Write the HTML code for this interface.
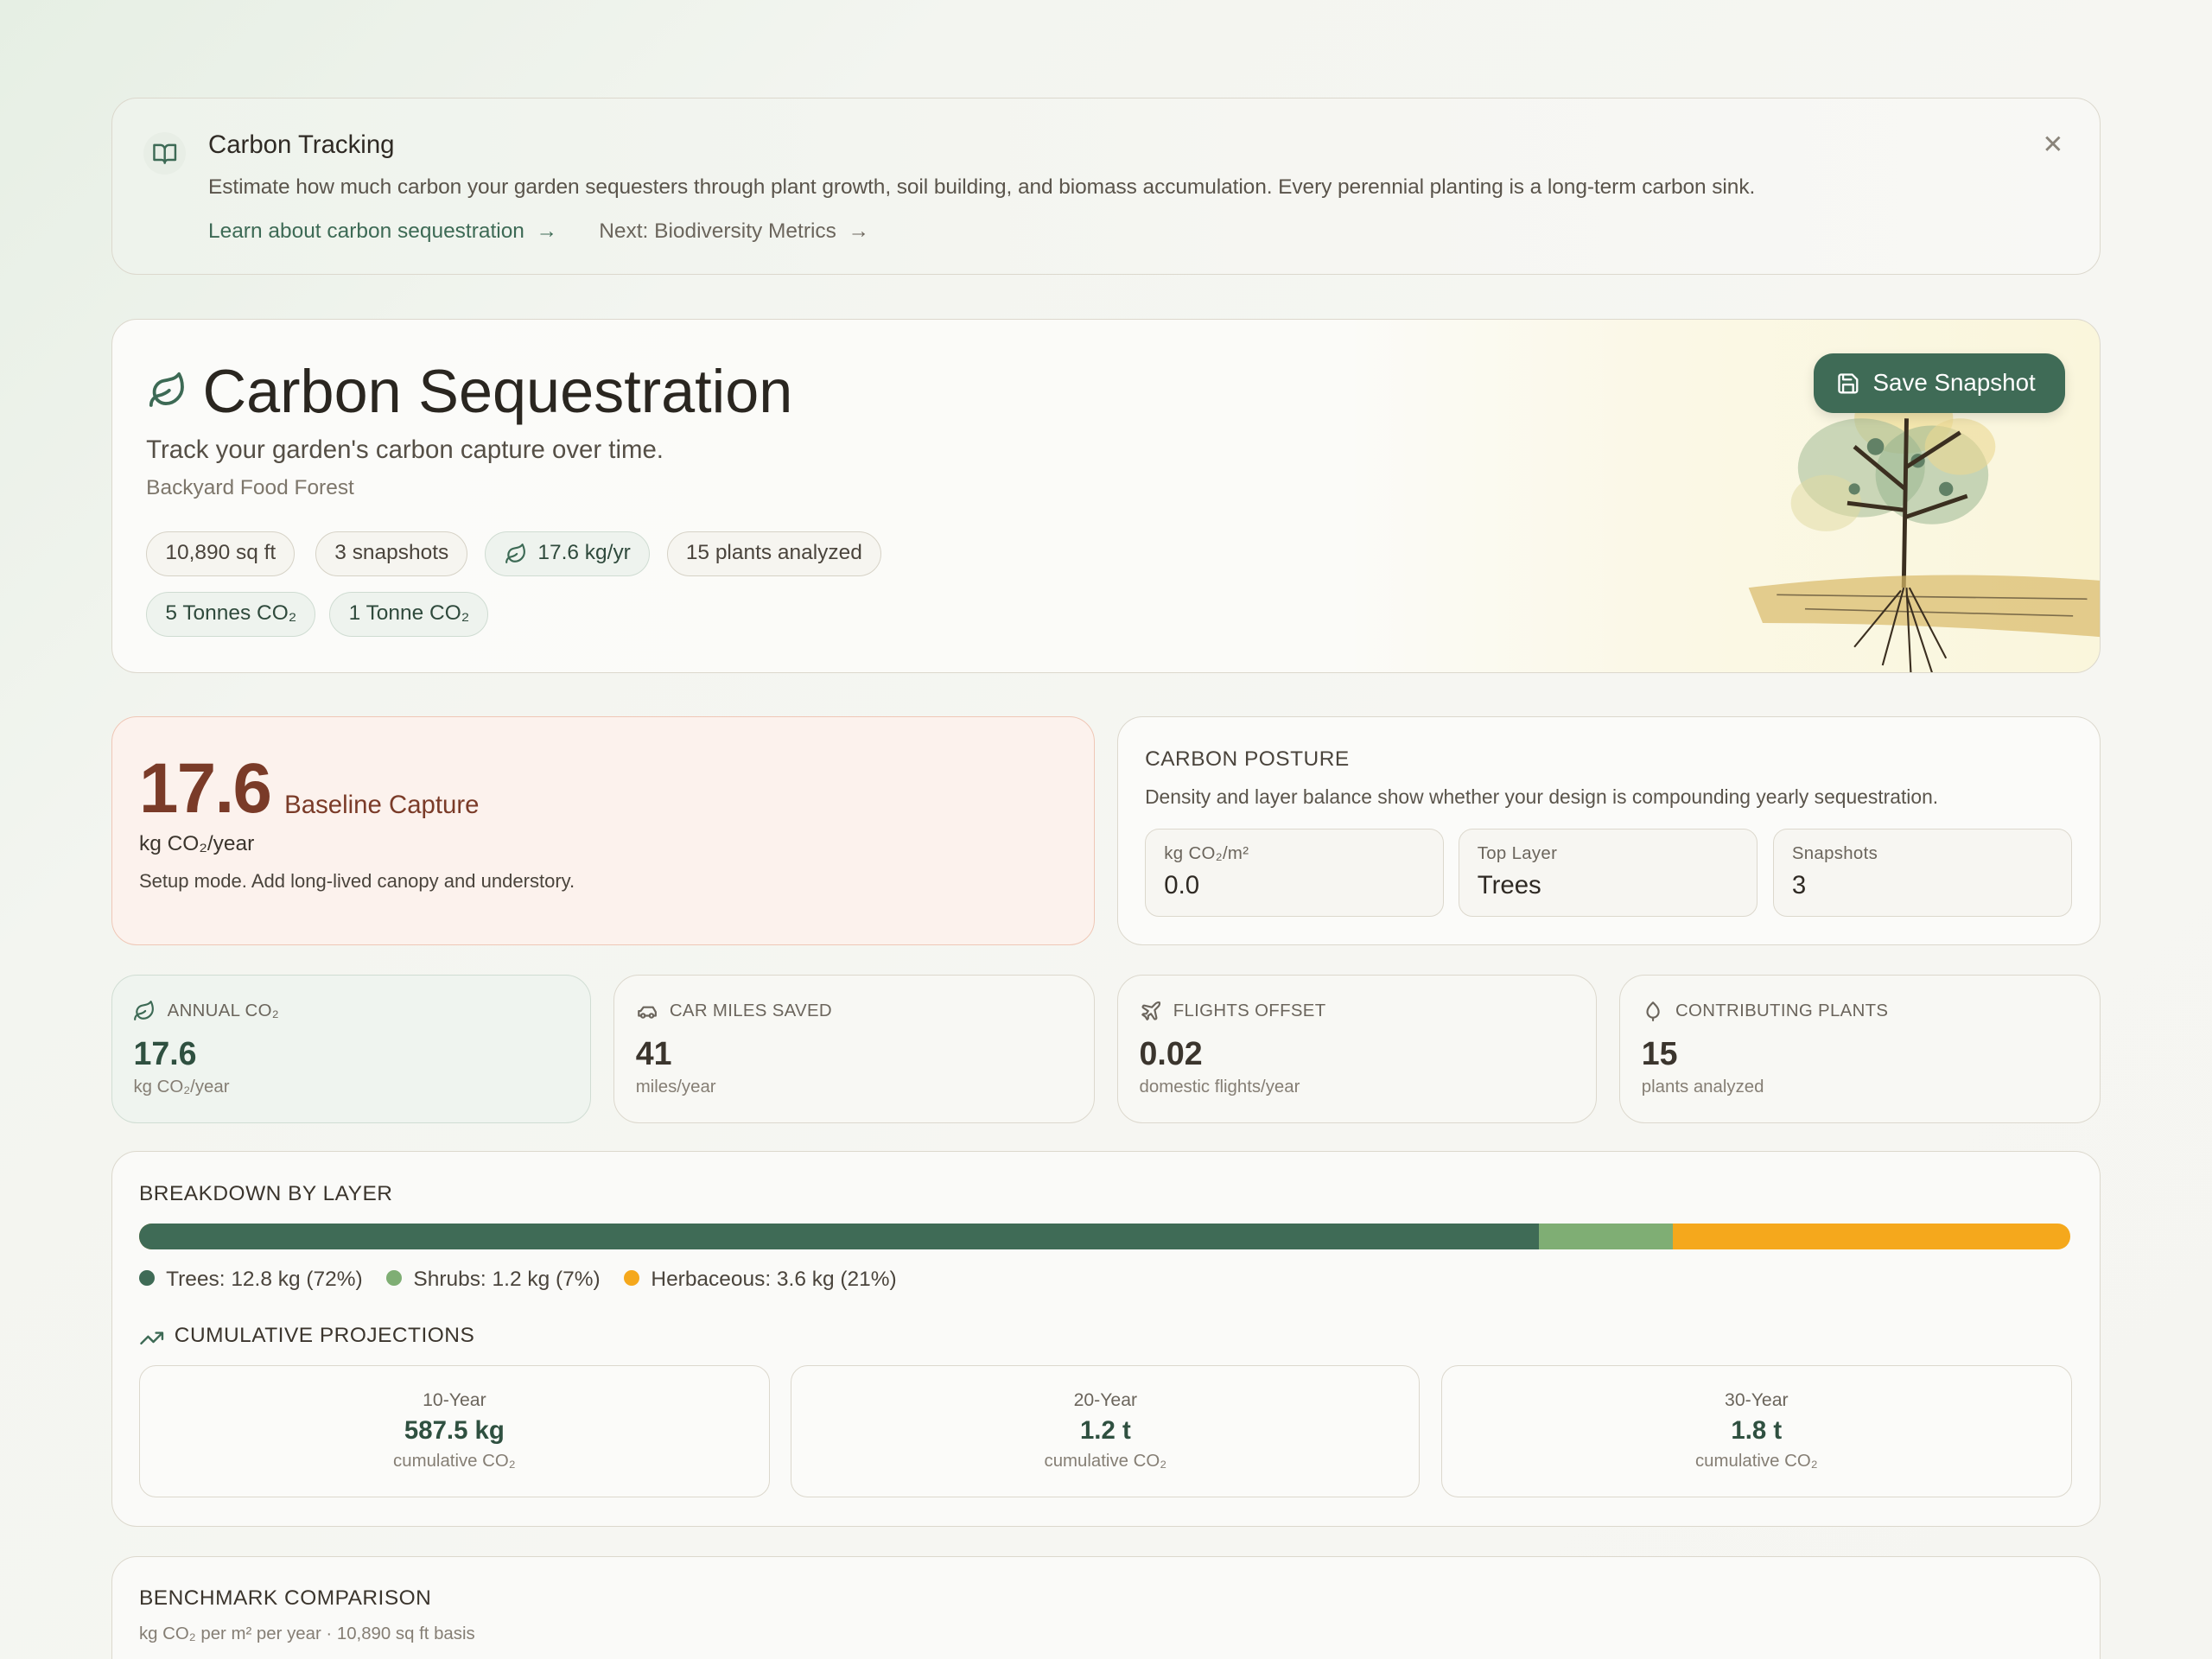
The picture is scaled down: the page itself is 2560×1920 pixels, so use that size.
<!DOCTYPE html>
<html><head><meta charset="utf-8"><style>
*{box-sizing:border-box;margin:0;padding:0}
html,body{width:2560px;height:1920px;overflow:hidden;background:#f4f5f1}
#w{zoom:1.632653;width:1568px;height:1176px;position:relative;font-family:"Liberation Sans",sans-serif;color:#2f2a24;background:linear-gradient(135deg,#e6efe4 0%,#f3f5f0 25%,#f6f6f2 60%,#f5f5f1 100%)}
.card{position:absolute;border:1px solid #dcd8cd;border-radius:18px;background:#f8f8f4}
.abs{position:absolute;white-space:nowrap}
.chip{position:absolute;height:32px;border:1px solid #d6d2c6;border-radius:16px;background:#f6f5f0;font-size:15px;color:#4a443c;line-height:30px;padding:0 13px}
.chip.g{background:#eef3ee;border-color:#cfdcd2;color:#2f4a3c}
.lbl{font-size:12.5px;color:#6b655c;letter-spacing:.2px}
.sub{font-size:12.5px;color:#857e74}
.big{font-size:23px;font-weight:bold;color:#3b352d}
.ic{position:absolute;fill:none;stroke-width:2;stroke-linecap:round;stroke-linejoin:round}
</style></head><body><div id="w">

<div class="card" style="left:79px;top:69px;width:1410px;height:126px;background:linear-gradient(90deg,#eef3ec,#f6f6f2 60%,#f8f8f5)">
  <div class="abs" style="left:22px;top:24px;width:30px;height:30px;border-radius:50%;background:#e8eee6"></div>
  <svg class="ic" style="left:28px;top:30px" width="18" height="18" viewBox="0 0 24 24" stroke="#3d6a55"><path d="M2 4h6a4 4 0 0 1 4 4v13a3 3 0 0 0-3-3H2z M22 4h-6a4 4 0 0 0-4 4v13a3 3 0 0 1 3-3h7z"/></svg>
  <div class="abs" style="left:68px;top:23px;font-size:18px;color:#2f2a24">Carbon Tracking</div>
  <div class="abs" style="left:68px;top:55px;font-size:15px;letter-spacing:-.05px;color:#5a544b">Estimate how much carbon your garden sequesters through plant growth, soil building, and biomass accumulation. Every perennial planting is a long-term carbon sink.</div>
  <div class="abs" style="left:68px;top:86px;font-size:15px;color:#3d6a55">Learn about carbon sequestration &nbsp;→</div>
  <div class="abs" style="left:345px;top:86px;font-size:15px;color:#6b655c">Next: Biodiversity Metrics &nbsp;→</div>
  <div class="abs" style="left:1368px;top:22px;font-size:18px;color:#8a847a">✕</div>
</div>

<div class="card" style="left:79px;top:226px;width:1410px;height:251px;background:linear-gradient(90deg,#fbfbf9 0%,#fbfbf8 62%,#fbf8e6 78%,#faf6dc 100%);overflow:hidden">
  <svg class="abs" style="left:1140px;top:0" width="270" height="251" viewBox="0 0 270 251">
    <g opacity=".75">
    <ellipse cx="130" cy="70" rx="35" ry="25" fill="#e8c95a" opacity=".5"/>
    <ellipse cx="100" cy="105" rx="45" ry="35" fill="#8fae84" opacity=".6"/>
    <ellipse cx="150" cy="110" rx="40" ry="35" fill="#6f9a70" opacity=".5"/>
    <ellipse cx="170" cy="90" rx="25" ry="20" fill="#e6cf7a" opacity=".6"/>
    <ellipse cx="75" cy="130" rx="25" ry="20" fill="#d8cf8a" opacity=".5"/>
    <circle cx="110" cy="90" r="6" fill="#2f5a3e"/><circle cx="140" cy="100" r="5" fill="#2f5a3e"/><circle cx="95" cy="120" r="4" fill="#2f5a3e"/><circle cx="160" cy="120" r="5" fill="#2f5a3e"/>
    </g>
    <path d="M130 190 L132 70 M131 120 L95 90 M131 105 L170 80 M131 140 L175 125 M131 135 L90 130" stroke="#3b2f20" stroke-width="3" fill="none"/>
    <path d="M20 190 Q140 175 270 185 L270 225 Q150 215 30 215Z" fill="#d9b968" opacity=".7"/>
    <path d="M40 195 L260 198 M60 205 L250 210" stroke="#3b2f20" stroke-width="1" opacity=".6"/>
    <path d="M130 190 L115 245 M132 190 L135 250 M134 190 L160 240 M128 192 L95 232 M132 195 L150 250" stroke="#3b2f20" stroke-width="1.3"/>
  </svg>
  <svg class="ic" style="left:25px;top:36px" width="28" height="28" viewBox="0 0 24 24" stroke="#3d6a55"><path d="M11 20A7 7 0 0 1 9.8 6.1C15.5 5 17 4.5 19 2c1 2 2 4.2 2 8 0 5.5-4.8 10-10 10Z"/><path d="M2 21c0-3 1.9-5.4 5.1-6C9.5 14.5 12 13 13 12"/></svg>
  <div class="abs" style="left:64px;top:26px;font-size:43px;color:#2a2620">Carbon Sequestration</div>
  <div class="abs" style="left:24px;top:82px;font-size:18px;color:#554f46">Track your garden's carbon capture over time.</div>
  <div class="abs" style="left:24px;top:111px;font-size:15px;color:#7d766b">Backyard Food Forest</div>
  <div class="chip" style="left:24px;top:150px">10,890 sq ft</div>
  <div class="chip" style="left:144px;top:150px">3 snapshots</div>
  <div class="chip g" style="left:264px;top:150px;padding-left:37px">17.6 kg/yr</div>
  <svg class="ic" style="left:278px;top:158px" width="16" height="16" viewBox="0 0 24 24" stroke="#3d6a55"><path d="M11 20A7 7 0 0 1 9.8 6.1C15.5 5 17 4.5 19 2c1 2 2 4.2 2 8 0 5.5-4.8 10-10 10Z"/><path d="M2 21c0-3 1.9-5.4 5.1-6C9.5 14.5 12 13 13 12"/></svg>
  <div class="chip" style="left:393px;top:150px">15 plants analyzed</div>
  <div class="chip g" style="left:24px;top:193px">5 Tonnes CO₂</div>
  <div class="chip g" style="left:154px;top:193px">1 Tonne CO₂</div>
  <div class="abs" style="left:1206px;top:24px;width:178px;height:42px;border-radius:14px;background:#3f6b56;color:#fff;font-size:17px;line-height:42px;padding-left:42px;box-shadow:0 3px 8px rgba(0,0,0,.12)">Save Snapshot</div>
  <svg class="ic" style="left:1222px;top:37px" width="17" height="17" viewBox="0 0 24 24" stroke="#fff"><path d="M5 3h11l5 5v11a2 2 0 0 1-2 2H5a2 2 0 0 1-2-2V5a2 2 0 0 1 2-2z M7 21v-8h10v8 M7 3v5h8"/></svg>
</div>

<div class="card" style="left:79px;top:508px;width:697px;height:162px;background:#fcf2ed;border-color:#efc7b6">
  <div class="abs" style="left:19px;top:22px;font-size:50px;font-weight:bold;letter-spacing:-1px;color:#7a3b28">17.6</div>
  <div class="abs" style="left:122px;top:52px;font-size:18px;color:#7a3b28">Baseline Capture</div>
  <div class="abs" style="left:19px;top:81px;font-size:15px;color:#3b352d">kg CO₂/year</div>
  <div class="abs" style="left:19px;top:108px;font-size:13.5px;color:#4a443c">Setup mode. Add long-lived canopy and understory.</div>
</div>

<div class="card" style="left:792px;top:508px;width:697px;height:162px;background:#fbfbf9">
  <div class="abs" style="left:19px;top:21px;font-size:15px;color:#4a443c;letter-spacing:.3px">CARBON POSTURE</div>
  <div class="abs" style="left:19px;top:48px;font-size:14px;color:#5a544b">Density and layer balance show whether your design is compounding yearly sequestration.</div>
  <div class="card" style="left:19px;top:79px;width:212px;height:62px;border-radius:10px;background:#f7f6f2"><div class="abs lbl" style="left:13px;top:10px">kg CO₂/m²</div><div class="abs" style="left:13px;top:29px;font-size:18px">0.0</div></div>
  <div class="card" style="left:241px;top:79px;width:212px;height:62px;border-radius:10px;background:#f7f6f2"><div class="abs lbl" style="left:13px;top:10px">Top Layer</div><div class="abs" style="left:13px;top:29px;font-size:18px">Trees</div></div>
  <div class="card" style="left:464px;top:79px;width:212px;height:62px;border-radius:10px;background:#f7f6f2"><div class="abs lbl" style="left:13px;top:10px">Snapshots</div><div class="abs" style="left:13px;top:29px;font-size:18px">3</div></div>
</div>

<div class="card" style="left:79px;top:691px;width:340px;height:105px;background:#eff4ef;border-color:#d0ddd3">
  <svg class="ic" style="left:15px;top:17px" width="16" height="16" viewBox="0 0 24 24" stroke="#3d6a55"><path d="M11 20A7 7 0 0 1 9.8 6.1C15.5 5 17 4.5 19 2c1 2 2 4.2 2 8 0 5.5-4.8 10-10 10Z"/><path d="M2 21c0-3 1.9-5.4 5.1-6C9.5 14.5 12 13 13 12"/></svg>
  <div class="abs lbl" style="left:39px;top:18px">ANNUAL CO₂</div>
  <div class="abs big" style="left:15px;top:42px;color:#2f5040">17.6</div><div class="abs sub" style="left:15px;top:72px">kg CO₂/year</div></div>
<div class="card" style="left:435px;top:691px;width:341px;height:105px">
  <svg class="ic" style="left:15px;top:17px" width="16" height="16" viewBox="0 0 24 24" stroke="#6b655c"><path d="M19 17h2v-4l-3-5H8L5 12H3v5h2"/><circle cx="7.5" cy="17" r="2"/><circle cx="16.5" cy="17" r="2"/><path d="M9.5 17h5"/></svg>
  <div class="abs lbl" style="left:39px;top:18px">CAR MILES SAVED</div>
  <div class="abs big" style="left:15px;top:42px">41</div><div class="abs sub" style="left:15px;top:72px">miles/year</div></div>
<div class="card" style="left:792px;top:691px;width:340px;height:105px">
  <svg class="ic" style="left:15px;top:17px" width="16" height="16" viewBox="0 0 24 24" stroke="#6b655c"><path d="M17.8 19.2 16 11l3.5-3.5C21 6 21.5 4 21 3c-1-.5-3 0-4.5 1.5L13 8 4.8 6.2c-.5-.1-.9.1-1.1.5l-.3.5c-.2.5-.1 1 .3 1.3L9 12l-2 3H4l-1 1 3 2 2 3 1-1v-3l3-2 3.5 5.3c.3.4.8.5 1.3.3l.5-.2c.4-.3.6-.7.5-1.2z"/></svg>
  <div class="abs lbl" style="left:39px;top:18px">FLIGHTS OFFSET</div>
  <div class="abs big" style="left:15px;top:42px">0.02</div><div class="abs sub" style="left:15px;top:72px">domestic flights/year</div></div>
<div class="card" style="left:1148px;top:691px;width:341px;height:105px">
  <svg class="ic" style="left:15px;top:17px" width="16" height="16" viewBox="0 0 24 24" stroke="#6b655c"><path d="M12 3c-3 3-6 6-6 10a6 6 0 0 0 12 0c0-4-3-7-6-10z M12 19v3"/></svg>
  <div class="abs lbl" style="left:39px;top:18px">CONTRIBUTING PLANTS</div>
  <div class="abs big" style="left:15px;top:42px">15</div><div class="abs sub" style="left:15px;top:72px">plants analyzed</div></div>

<div class="card" style="left:79px;top:816px;width:1410px;height:266px;background:#fafaf8">
  <div class="abs" style="left:19px;top:21px;font-size:15px;color:#3b352d;letter-spacing:.3px">BREAKDOWN BY LAYER</div>
  <div class="abs" style="left:19px;top:51px;width:1369px;height:18px;border-radius:9px;overflow:hidden;background:#f5a81c">
    <div class="abs" style="left:0;top:0;width:992px;height:18px;background:#3f6b56"></div>
    <div class="abs" style="left:992px;top:0;width:95px;height:18px;background:#7fae74"></div>
  </div>
  <div class="abs" style="left:19px;top:82px;font-size:15px;color:#4a443c"><span style="display:inline-block;width:11px;height:11px;border-radius:50%;background:#3f6b56"></span>&nbsp; Trees: 12.8 kg (72%) &nbsp;&nbsp;&nbsp;<span style="display:inline-block;width:11px;height:11px;border-radius:50%;background:#7fae74"></span>&nbsp; Shrubs: 1.2 kg (7%) &nbsp;&nbsp;&nbsp;<span style="display:inline-block;width:11px;height:11px;border-radius:50%;background:#f5a81c"></span>&nbsp; Herbaceous: 3.6 kg (21%)</div>
  <svg class="ic" style="left:19px;top:123px" width="18" height="18" viewBox="0 0 24 24" stroke="#3d6a55"><path d="M22 7l-8.5 8.5-5-5L2 17 M16 7h6v6"/></svg>
  <div class="abs" style="left:44px;top:122px;font-size:15px;color:#3b352d;letter-spacing:.3px">CUMULATIVE PROJECTIONS</div>
  <div class="card" style="left:19px;top:151px;width:447px;height:94px;border-radius:12px;background:#fbfbf9;text-align:center"><div style="margin-top:17px;font-size:13px;color:#6b655c">10-Year</div><div style="font-size:18px;font-weight:bold;color:#2f5040;margin-top:4px">587.5 kg</div><div class="sub" style="margin-top:4px">cumulative CO₂</div></div>
  <div class="card" style="left:481px;top:151px;width:446px;height:94px;border-radius:12px;background:#fbfbf9;text-align:center"><div style="margin-top:17px;font-size:13px;color:#6b655c">20-Year</div><div style="font-size:18px;font-weight:bold;color:#2f5040;margin-top:4px">1.2 t</div><div class="sub" style="margin-top:4px">cumulative CO₂</div></div>
  <div class="card" style="left:942px;top:151px;width:447px;height:94px;border-radius:12px;background:#fbfbf9;text-align:center"><div style="margin-top:17px;font-size:13px;color:#6b655c">30-Year</div><div style="font-size:18px;font-weight:bold;color:#2f5040;margin-top:4px">1.8 t</div><div class="sub" style="margin-top:4px">cumulative CO₂</div></div>
</div>

<div class="card" style="left:79px;top:1103px;width:1410px;height:120px;background:#fafaf8">
  <div class="abs" style="left:19px;top:21px;font-size:15px;color:#3b352d;letter-spacing:.3px">BENCHMARK COMPARISON</div>
  <div class="abs sub" style="left:19px;top:48px">kg CO₂ per m² per year · 10,890 sq ft basis</div>
</div>
</div></body></html>
